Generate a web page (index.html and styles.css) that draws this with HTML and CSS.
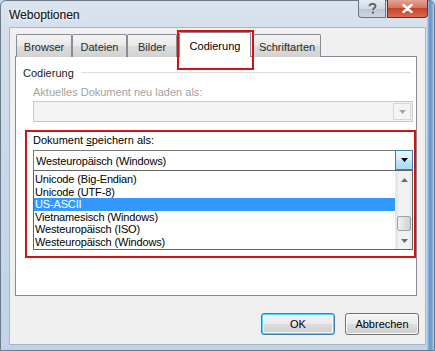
FILE: index.html
```html
<!DOCTYPE html>
<html lang="de">
<head>
<meta charset="utf-8">
<title>Weboptionen</title>
<link rel="stylesheet" href="styles.css">
</head>
<body>
<div class="window">
  <div class="titlebar">
    <span class="title">Weboptionen</span>
    <div class="caption">
      <span class="cap-btn help"><svg width="9" height="11" viewBox="0 0 9 11"><path d="M1.5 3.2 C1.5 1.2 3 0.8 4.5 0.8 C6.3 0.8 7.5 1.8 7.5 3.2 C7.5 4.8 5 5.2 5 7" fill="none" stroke="#5b6470" stroke-width="1.8"/><rect x="4" y="8.6" width="2" height="2" fill="#5b6470"/></svg></span>
      <span class="cap-btn close"><svg width="11" height="9" viewBox="0 0 11 9"><path d="M1.5 1 L9.5 8 M9.5 1 L1.5 8" stroke="#ffffff" stroke-width="2.4" stroke-linecap="round"/></svg></span>
    </div>
  </div>
  <div class="client">
    <div class="tabs">
      <div class="tab tab-browser">Browser</div>
      <div class="tab tab-dateien">Dateien</div>
      <div class="tab tab-bilder">Bilder</div>
      <div class="tab tab-active">Codierung<span class="mark"></span></div>
      <div class="tab tab-schrift">Schriftarten</div>
    </div>
    <div class="panel">
      <div class="group-title"><span>Codierung</span><span class="rule"></span></div>
      <div class="label label-disabled">Aktuelles Dokument neu laden als:</div>
      <div class="combo combo-disabled"><span class="combo-text"></span><span class="dd dd-disabled"><svg width="7" height="4" viewBox="0 0 7 4"><path d="M0 0 H7 L3.5 4 Z" fill="#a6a6a6"/></svg></span></div>
      <div class="redbox">
        <div class="label">Dokument <u>s</u>peichern als:</div>
        <div class="combo combo-open"><span class="combo-text">Westeuropäisch (Windows)</span><span class="dd dd-open"><svg width="7" height="4" viewBox="0 0 7 4"><path d="M0 0 H7 L3.5 4 Z" fill="#000"/></svg></span></div>
        <div class="listbox">
          <div class="items">
            <div class="item">Unicode (Big-Endian)</div>
            <div class="item">Unicode (UTF-8)</div>
            <div class="item item-sel">US-ASCII</div>
            <div class="item">Vietnamesisch (Windows)</div>
            <div class="item">Westeuropäisch (ISO)</div>
            <div class="item">Westeuropäisch (Windows)</div>
          </div>
          <div class="scrollbar">
            <span class="sb-arrow"><svg width="7" height="4" viewBox="0 0 7 4"><path d="M0 4 H7 L3.5 0 Z" fill="#6a6a6a"/></svg></span>
            <span class="sb-track"><span class="sb-thumb"></span></span>
            <span class="sb-arrow"><svg width="7" height="4" viewBox="0 0 7 4"><path d="M0 0 H7 L3.5 4 Z" fill="#6a6a6a"/></svg></span>
          </div>
        </div>
      </div>
    </div>
    <div class="buttons">
      <button class="btn btn-default">OK</button>
      <button class="btn">Abbrechen</button>
    </div>
  </div>
</div>
</body>
</html>
```
FILE: styles.css
```css
* { box-sizing: border-box; }
html, body { margin: 0; padding: 0; }
body {
  font-family: "Liberation Sans", Arial, sans-serif;
  font-size: 11px;
  color: #000;
  background: #c9d8e8;
}
.window {
  width: 435px;
  height: 351px;
  padding: 0 8px 0 8px;
  display: flex;
  flex-direction: column;
  border: 1px solid #6b7b8c;
  border-radius: 6px 6px 0 0;
  background:
    linear-gradient(to right, rgba(0,0,0,0) 426px, #8fb4dc 427px, #5f93cc 429px, #7aa6d6 431px, #b9cfe6 433px),
    linear-gradient(to bottom, #dbe4ee 0, #d2deeb 40px, #c6d7e9 200px, #c0d3e8 100%);
}
.titlebar {
  height: 26px;
  display: flex;
  align-items: flex-start;
}
.title {
  margin-top: 7px;
  font-family: "Liberation Sans", Arial, sans-serif;
  font-size: 12px;
  color: #141820;
  text-shadow: 0 0 4px #ffffff, 0 0 2px #ffffff, 0.3px 0 0 #3a3f48;
}
.caption {
  margin-left: auto;
  margin-right: -2px;
  margin-top: -1px;
  display: flex;
  gap: 1px;
}
.cap-btn {
  height: 18px;
  display: flex;
  align-items: center;
  justify-content: center;
  border: 1px solid #6d7584;
  border-top: none;
}
.help {
  width: 28px;
  border-radius: 0 0 0 4px;
  background: linear-gradient(to bottom, #e6ebf1 0, #d3dae3 50%, #bcc6d2 51%, #cdd6e0 100%);
}
.close {
  width: 41px;
  border-color: #7a2a22;
  border-radius: 0 0 4px 0;
  background: linear-gradient(to bottom, #e5a396 0, #d8755f 45%, #c5432b 50%, #d86a4f 100%);
}
.client {
  height: 318px;
  background: #f0f0f0;
  border: 1px solid #a8b6c6;
  padding: 6px 8px 0 5px;
  display: flex;
  flex-direction: column;
}
.tabs {
  display: flex;
  align-items: flex-end;
  height: 23px;
  padding-left: 1px;
  margin-bottom: -1px;
  position: relative;
  z-index: 1;
}
.tab {
  height: 23px;
  border: 1px solid #898c95;
  border-bottom: none;
  border-radius: 2px 2px 0 0;
  background: linear-gradient(to bottom, #f4f4f4 0, #e8e8e8 50%, #dcdcdc 51%, #d2d2d2 100%);
  color: #2a2a2a;
  display: flex;
  align-items: center;
  justify-content: center;
  padding-top: 2px;
}
.tab-browser { width: 56px; }
.tab-dateien { width: 55px; }
.tab-bilder { width: 50px; }
.tab-active {
  width: 72px;
  height: 25px;
  margin: 0 2px;
  background: #ffffff;
  color: #000;
  position: relative;
  padding-top: 1px;
}
.tab-schrift { width: 68px; }
.mark {
  position: absolute;
  left: -3px;
  top: -3px;
  width: 77px;
  height: 40px;
  border: 2px solid #d21313;
}
.panel {
  height: 240px;
  background: #ffffff;
  border: 1px solid #898c95;
  padding: 9px 0 0 0;
  display: flex;
  flex-direction: column;
}
.group-title {
  display: flex;
  align-items: center;
  margin-left: 7px;
  margin-right: 5px;
  height: 13px;
  color: #1a1a1a;
}
.rule {
  flex: 1;
  height: 1px;
  margin-left: 7px;
  background: #d5dfe5;
}
.label {
  height: 13px;
  line-height: 13px;
  margin-left: 17px;
}
.label-disabled {
  color: #a2a2a2;
  margin-top: 7px;
}
.combo {
  width: 380px;
  height: 21px;
  margin-left: 17px;
  display: flex;
  align-items: stretch;
}
.combo-disabled {
  margin-top: 2px;
  border: 1px solid #c9c9c9;
  background: #f3f3f3;
}
.combo-text {
  flex: 1;
  padding-left: 2px;
  display: flex;
  align-items: center;
  letter-spacing: -0.15px;
}
.dd {
  width: 18px;
  display: flex;
  align-items: center;
  justify-content: center;
}
.dd-disabled {
  margin: 1px;
  border: 1px solid #d6d6d6;
  background: #f4f4f4;
}
.redbox {
  margin: 8px 0 0 9px;
  height: 128px;
  border: 2px solid #d21313;
  padding-top: 2px;
  display: flex;
  flex-direction: column;
}
.redbox .label { margin-left: 6px; }
.redbox .combo { margin-left: 6px; }
.combo-open {
  margin-top: 3px;
  height: 20px;
  border: 1px solid #7a7a7a;
  border-bottom: none;
  background: #ffffff;
}
.dd-open {
  margin: -1px -1px 0 0;
  border: 1px solid #3c7fb1;
  background: linear-gradient(to bottom, #eaf6fd 0, #d9f0fc 45%, #bee6fd 50%, #a7d9f5 100%);
}
.listbox {
  width: 380px;
  height: 80px;
  margin-left: 6px;
  border: 1px solid #646464;
  background: #ffffff;
  display: flex;
}
.items {
  flex: 1;
  padding-top: 2px;
  letter-spacing: -0.15px;
}
.item {
  height: 12.6px;
  line-height: 13px;
  padding-left: 1px;
}
.item-sel {
  background: #3399ff;
  color: #ffffff;
}
.scrollbar {
  width: 17px;
  display: flex;
  flex-direction: column;
  background: linear-gradient(to right, #e3e3e3 0, #f2f2f2 20%, #f2f2f2 80%, #e6e6e6 100%);
  border-left: 1px solid #eaeaea;
}
.sb-arrow {
  height: 17px;
  display: flex;
  align-items: center;
  justify-content: center;
}
.sb-track {
  flex: 1;
  display: flex;
  flex-direction: column;
  justify-content: flex-end;
  padding: 0 1px 1px 1px;
}
.sb-thumb {
  height: 15px;
  border: 1px solid #a0a0a0;
  border-radius: 2px;
  background: linear-gradient(to right, #f1f1f1 0, #e2e2e2 50%, #d2d2d2 100%);
}
.buttons {
  display: flex;
  justify-content: flex-end;
  gap: 10px;
  margin-top: 17px;
  margin-right: -2px;
}
.btn {
  width: 74px;
  height: 22px;
  font-family: "Liberation Sans", Arial, sans-serif;
  font-size: 11px;
  color: #000;
  border: 1px solid #707070;
  border-radius: 3px;
  background: linear-gradient(to bottom, #f2f2f2 0, #ebebeb 50%, #dddddd 51%, #cfcfcf 100%);
  box-shadow: inset 0 0 0 1px #fbfbfb;
  padding: 0;
}
.btn-default {
  border-color: #3c7fb1;
  box-shadow: inset 0 0 0 1px #48d8fb, inset 0 0 0 2px #f6f6f6;
}
```
